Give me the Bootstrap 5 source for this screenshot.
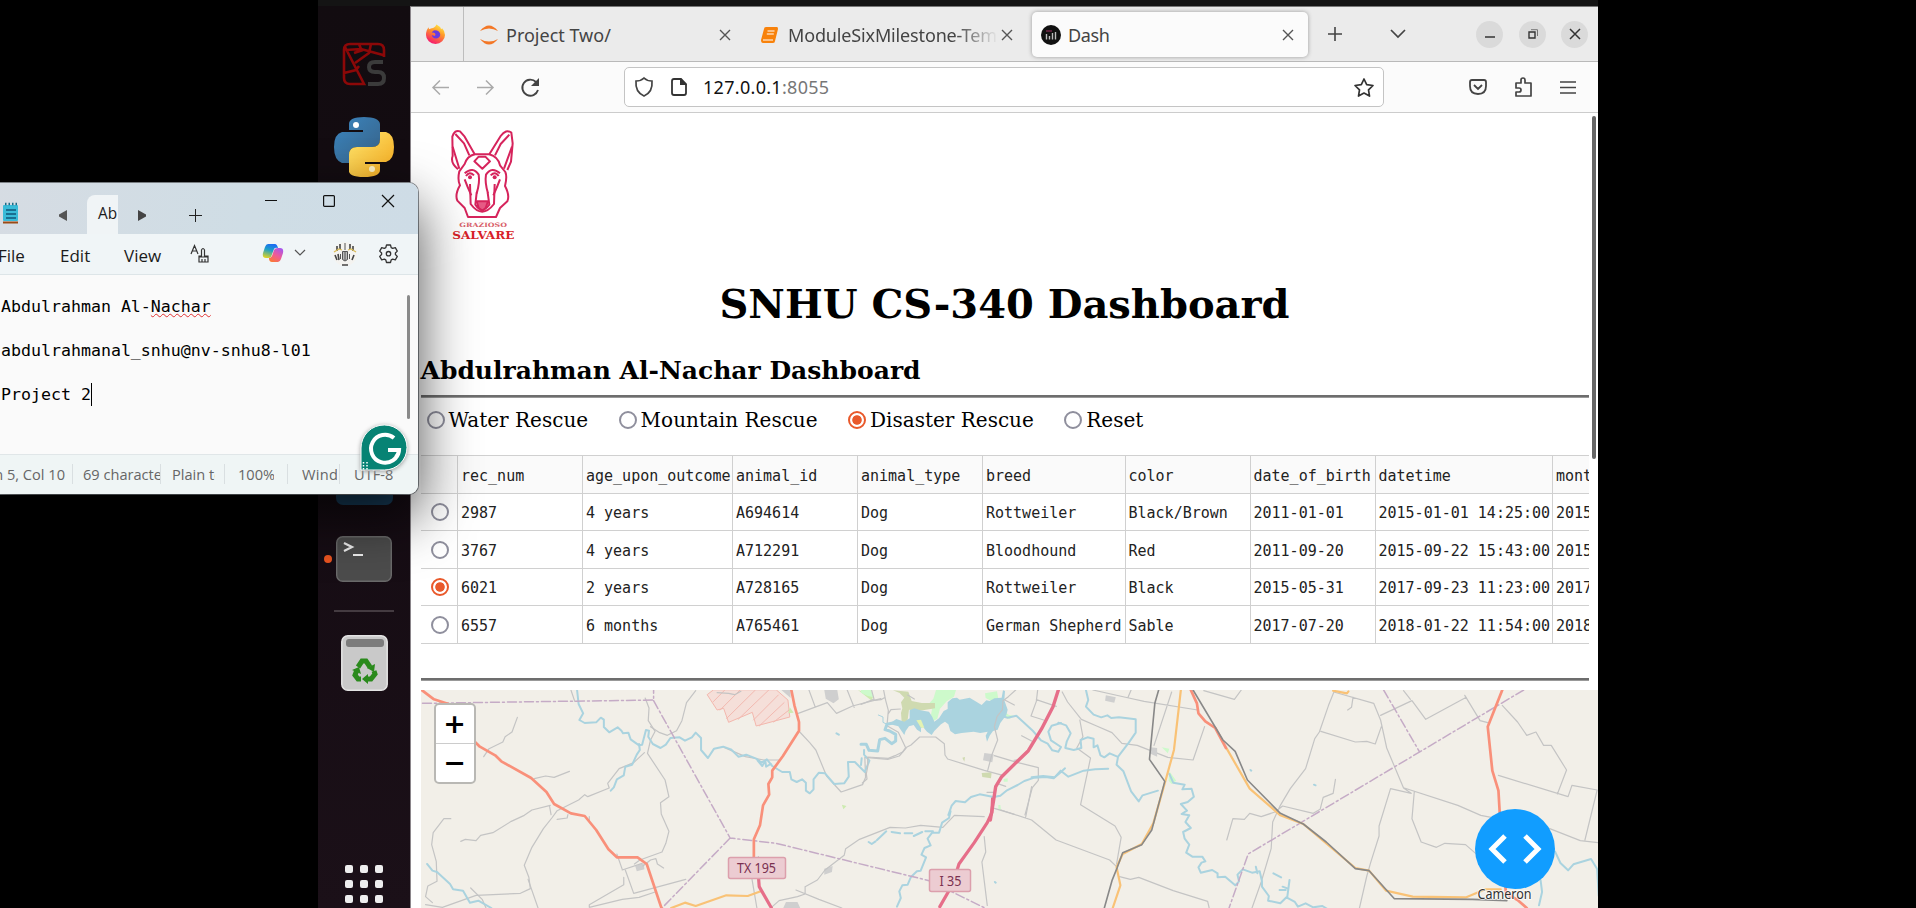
<!DOCTYPE html>
<html lang="en">
<head>
<meta charset="utf-8">
<title>Dash</title>
<link href="https://cdn.jsdelivr.net/npm/bootstrap@5.3.0/dist/css/bootstrap.min.css" rel="stylesheet">
<style>
html,body{height:100%}
body{background:#000;overflow:hidden;font-family:"Noto Sans",sans-serif;color:#222}
svg{display:block;overflow:visible;flex:none}
.desk{height:908px;padding-left:318px;position:relative}
.screen{width:1280px;height:908px;background:#141414;padding-top:6px}
.dock{width:92px;height:902px;background:linear-gradient(#120c10,#150c13 50%,#1b1018);padding-top:37px;position:relative}
.dock .term{margin-top:359px}
.dock .rule{width:60px;height:2px;background:#443b41;margin-top:28px}
.dock .bin{margin-top:23px}
.dock .apps{display:grid;grid-template-columns:repeat(3,8px);gap:7px;margin-top:174px}
.dock .apps i{width:8px;height:8px;border-radius:2px;background:#eee}
.running{position:absolute;left:6px;top:549px;width:8px;height:8px;border-radius:50%;background:#e95420}
.vsc{position:absolute;left:18px;top:450px;width:57px;height:49px;border-radius:7px;background:#18405f}
.browser{width:1188px;height:902px;background:#fff;overflow:hidden;border-left:1px solid #8a858a;border-top:1px solid #777}
.tabs{height:55px;background:#ebebeb;border-bottom:1px solid #b9b9b9;font:18px "Noto Sans",sans-serif;color:#444}
.pin{width:53px;height:54px;border-right:1px solid #bdbdbd;padding-left:15px}
.ftab{height:45px;padding-top:1px}
.ftab span{white-space:nowrap;overflow:hidden}
.ftab.on{width:276px;background:#fbfbfb;border-radius:5px;box-shadow:0 0 4px #999}
.fade-end{letter-spacing:-.15px;-webkit-mask-image:linear-gradient(90deg,#000 80%,transparent)}
.wbtn{width:27px;height:27px;border-radius:50%;background:#dadada}
.toolbar{height:51px;background:#fbfbfb;border-bottom:1px solid #ccc}
.url{width:760px;height:40px;border:1px solid #c4c4c4;border-radius:5px;background:#fff;font:18px "Noto Sans",sans-serif;color:#111}
.url span span{color:#777}
.page{position:relative;height:795px;padding-left:9.5px;color:#000;font-family:"DejaVu Serif",serif}
.inner{width:1168px}
.logo{margin-left:9.5px;padding-top:7px;height:149px}
h1.title{font:bold 40px/48px "DejaVu Serif",serif;margin:14px 0 0;text-align:center;padding-top:4px}
h3.who{font:bold 25px/30px "DejaVu Serif",serif;margin:28px 0 0;white-space:nowrap}
.bar{height:3px;background:#6d6d6d;border-bottom:1px solid #999}
.opts{height:34px;margin-top:4px;padding-left:6px;font:20px/36px "DejaVu Serif",serif}
.opts label{display:flex;align-items:center;gap:4px;margin-right:30.5px;white-space:nowrap;height:36px}
.rd{width:18px;height:18px;border:2.4px solid #8f8f9d;border-radius:50%;background:#fff;flex:none;display:block}
.rd.on{border-color:#e9592b;background:radial-gradient(circle,#e9592b 0 4.3px,#fff 5.2px)}
.grid-wrap{overflow:hidden;width:1168px;margin-top:19px}
.dt{table-layout:fixed;width:1256px;border-collapse:collapse;font:15px "DejaVu Sans Mono",monospace;color:#222;margin:0}
.dt td,.dt th{height:37.5px;border:1px solid #d0d0d0;padding:3px 0 0 3px;font-weight:400;white-space:nowrap;overflow:hidden;line-height:18px}
.dt th{background:#fafafa}
.dt tr>:first-child{border-left:0;padding:1px 0 0 10px}
.map{position:relative;width:1178px;height:219px;margin-top:9px;background:#f2efe8;overflow:hidden}
.zoomer{position:absolute;left:13px;top:13px;width:42px;height:81px;border:2px solid #b9b8b4;border-radius:5px;background:#fff;font:bold 27px/38px "DejaVu Sans",sans-serif;text-align:center;color:#000}
.zoomer div{height:38px}
.zoomer div+div{border-top:1px solid #ccc}
.thumb{position:absolute;right:2px;top:3px;width:4px;height:343px;border-radius:2px;background:#666}
.devbtn{position:absolute;left:1054px;top:119px;width:80px;height:80px;border-radius:50%;background:#119dff}
/* text editor window, floating above the desktop */
.note{position:absolute;left:-10px;top:183px;width:428px;height:311px;border-radius:0 9px 9px 0;box-shadow:0 22px 56px rgba(0,0,0,.7),0 0 0 1px #8c9196;background:#fafafa;font-family:"Open Sans","Noto Sans",sans-serif;color:#1b1b1b}
.n-tabs{height:51px;padding-left:10px;background:linear-gradient(100deg,#d6dce3,#cfdde5 60%,#cedce6);border-radius:0 9px 0 0}
.n-tab{width:31px;height:39px;background:#f0f4f6;border-radius:8px 0 0 0;overflow:hidden;font-size:15.4px;padding:9px 0 0 11px;white-space:nowrap;line-height:20px}
.n-menu{height:41px;background:#f0f5f7;border-bottom:1px solid #dde5e8;padding-left:9px;font-size:17px;line-height:43px}
.n-text{height:179px;padding:21px 0 0 11px;font:16.6px/22px "DejaVu Sans Mono",monospace;white-space:pre;color:#000}
.n-text u{text-decoration:underline wavy #e03030 1px;text-underline-offset:1px}
.n-stat{height:40px;background:#eff5f5;border-top:1px solid #e0e6e8;border-radius:0 0 9px 0;color:#666;font-size:14.6px;line-height:39px;white-space:nowrap;padding-left:4px}
.n-stat span{display:block;overflow:hidden}
.n-stat i{width:1px;height:20px;background:#d9dfe1;margin-top:9px}
.n-thumb{position:absolute;left:417px;top:112px;width:3px;height:124px;border-radius:2px;background:#8a8a8a}
.gram{position:absolute;left:370px;top:241px;filter:drop-shadow(0 1px 2px #999)}
.caret{border-right:1px solid #000;padding:2px 0}
.m path{fill:none;stroke-linejoin:round;stroke-linecap:round;vector-effect:non-scaling-stroke}
.m .w path{stroke:#aad3df;stroke-width:2}
.m .g path{stroke:#c4c4c4;stroke-width:1.2}
.m .p path{stroke:#c5abc6;stroke-width:1.5;stroke-dasharray:9 3 2 3}
.m .r path{stroke:#f9907a;stroke-width:2.7}
.m .y path{stroke:#f9c276;stroke-width:2.2}
.m .i path{stroke:#e66e89;stroke-width:3.2}
.m .k path{stroke:#888;stroke-width:1.6}
.m .f path{stroke:none}
</style>
</head>
<body>
<div class="desk">
<div class="screen d-flex">
 <aside class="dock d-flex flex-column align-items-center">
  <svg width="42" height="42" viewBox="0 0 42 42" fill="none" stroke="#8c0808" stroke-width="2.6"><path d="M41 14V7q0-6-6-6H7Q1 1 1 7v28q0 6 6 6h14L2 4M3 7l15-1 22 6M16 1l2 5M28 1l-2 9-14 10M20 7l-9 3M1 30l12-3 3-4"/><path d="M40 19h-8q-6 0-6 5t6 5h3q6 0 6 6t-6 6H25" stroke="#3b3b3b" stroke-width="4"/></svg>
  <svg style="margin-top:32px" width="60" height="60" viewBox="0 0 60 60"><defs><linearGradient id="pb" x1="0" y1="0" x2="1" y2="1"><stop stop-color="#3b86c0"/><stop offset="1" stop-color="#376186"/></linearGradient><linearGradient id="py" x1="0" y1="0" x2="1" y2="1"><stop stop-color="#ffe870"/><stop offset="1" stop-color="#f5a81c"/></linearGradient></defs><path fill="url(#pb)" d="M15 7q0-7 15-7t16 7v15q0 8-8 8H23q-8 0-8 8v8H8q-8-3-8-16t8-15h21v-2H15z"/><path fill="url(#py)" d="M46 15h6q8 2 8 15t-8 15H31v2h15v6q0 7-16 7t-15-7V38q0-8 8-8h15q8 0 8-8z"/><circle cx="22" cy="8" r="3" fill="#fff"/><circle cx="38" cy="52" r="3" fill="#fff3c4"/></svg>
  <svg class="term" width="56" height="46" viewBox="0 0 56 46"><rect x=".7" y=".7" width="54.6" height="44.6" rx="6" fill="#4c4c4c" stroke="#6a6a6a" stroke-width="1.4"/><path d="M8 7l8 4-8 4M17 19h10" fill="none" stroke="#eee" stroke-width="2.2"/></svg>
  <div class="rule"></div>
  <svg class="bin" width="47" height="56" viewBox="0 0 47 56"><rect x=".8" y=".8" width="45.4" height="54.4" rx="6" fill="#c9c9c9" stroke="#e4e4e4" stroke-width="1.5"/><rect x="5" y="4" width="38" height="8" rx="3" fill="#7c7c7c"/><g fill="none" stroke="#2a8a1c" stroke-width="5"><path d="M17 32l4-6h4l4 6M33 36l1 3-4 5h-5M20 44h-3l-3-4 2-5"/></g><path fill="#2a8a1c" d="M26 33l8-4-1 8zM27 39v10l-6-5zM11 35l7-3 2 7z"/></svg>
  <div class="apps"><i></i><i></i><i></i><i></i><i></i><i></i><i></i><i></i><i></i></div>
  <div class="vsc"></div><div class="running"></div>
 </aside>

 <main class="browser">
  <div class="tabs d-flex align-items-center">
   <div class="pin d-flex align-items-center">
    <svg width="19" height="20" viewBox="0 0 20 20"><defs><linearGradient id="fx" x1=".8" y1="0" x2=".3" y2="1"><stop stop-color="#fff24a"/><stop offset=".4" stop-color="#ff9a28"/><stop offset="1" stop-color="#f5136f"/></linearGradient></defs><path fill="url(#fx)" d="M11 0q4 2 5 5l1-1q3 3 3 7a10 9.4 0 01-20 0q0-5 3-8v2l3-1q3 0 5-4z"/><path fill="#6a3be0" d="M9 6q6 0 6 5a4.6 4.6 0 01-9 0l3 1q2-1 0-3-2-1-3 0 1-3 3-3z"/></svg>
   </div>
   <div class="ftab d-flex align-items-center" style="width:281px;padding-left:15px">
    <svg width="20" height="20" viewBox="0 0 20 20" fill="#f37726"><path d="M1 6q9-11 18 0Q10 1 1 6M1 14q9 11 18 0-9 5-18 0"/></svg>
    <span style="margin-left:7px;width:214px">Project Two/</span>
    <svg width="10" height="10" viewBox="0 0 10 10" stroke="#555" stroke-width="1.4"><path d="M0 0l10 10M10 0L0 10"/></svg>
   </div>
   <div class="ftab d-flex align-items-center" style="width:287px;padding-left:16px">
    <svg width="17" height="16" viewBox="0 0 17 16"><path fill="#f8820b" d="M5 0h11q1 0 1 2l-3 12q0 2-2 2H2q-2 0-2-3L3 2q0-2 2-2z"/><path d="M6.500 4h7M5.800 7h7M2 13h10" stroke="#fff" stroke-width="1.100"/></svg>
    <span class="fade-end" style="margin-left:10px;width:210px">ModuleSixMilestone-Temp</span>
    <svg style="margin-left:4px" width="10" height="10" viewBox="0 0 10 10" stroke="#555" stroke-width="1.4"><path d="M0 0l10 10M10 0L0 10"/></svg>
   </div>
   <div class="ftab on d-flex align-items-center" style="padding-left:9px">
    <svg width="20" height="20" viewBox="0 0 20 20"><circle cx="10" cy="10" r="10" fill="#111"/><path d="M5.500 14.500V9M8.500 14.500V11M11.500 14.500V8M14.500 14.500V7" stroke="#bbb" stroke-width="1.400"/><path d="M5 6h6" stroke="#a03060"/></svg>
    <span style="margin-left:7px;width:215px;letter-spacing:-.4px">Dash</span>
    <svg width="10" height="10" viewBox="0 0 10 10" stroke="#555" stroke-width="1.4"><path d="M0 0l10 10M10 0L0 10"/></svg>
   </div>
   <svg style="margin-left:20px" width="14" height="14" viewBox="0 0 14 14" stroke="#444" stroke-width="1.600"><path d="M7 0v14M0 7h14"/></svg>
   <svg style="margin-left:48px" width="16" height="8" viewBox="0 0 16 8" fill="none" stroke="#444" stroke-width="1.700"><path d="M1 0l7 7 7-7"/></svg>
   <div class="wbtn d-flex align-items-center justify-content-center" style="margin-left:70px"><svg width="10" height="10" viewBox="0 0 10 10" stroke="#333" stroke-width="1.500"><path d="M0 8h10"/></svg></div>
   <div class="wbtn d-flex align-items-center justify-content-center" style="margin-left:16px"><svg width="10" height="10" viewBox="0 0 10 10" fill="none" stroke="#333" stroke-width="1.400"><path d="M1 3h6v6H1z"/><path d="M3 .7h6.500V7" stroke="#777" stroke-width="1"/></svg></div>
   <div class="wbtn d-flex align-items-center justify-content-center" style="margin-left:15px"><svg width="10" height="10" viewBox="0 0 10 10" stroke="#333" stroke-width="1.500"><path d="M0 0l10 10M10 0L0 10"/></svg></div>
  </div>

  <div class="toolbar d-flex align-items-center">
   <svg style="margin-left:21px" width="17" height="15" viewBox="0 0 17 15" fill="none" stroke="#aaa" stroke-width="1.500"><path d="M17 7.500H1M8 .5l-7 7 7 7"/></svg>
   <svg style="margin-left:28px" width="17" height="15" viewBox="0 0 17 15" fill="none" stroke="#aaa" stroke-width="1.500"><path d="M0 7.500h16M9 .5l7 7-7 7"/></svg>
   <svg style="margin-left:27px" width="19" height="19" viewBox="0 0 19 19" fill="none" stroke="#444" stroke-width="1.900"><path d="M17 12A8 8 0 1115 4"/><path d="M18 0v8h-8z" fill="#444" stroke="none"/></svg>
   <div class="url d-flex align-items-center" style="margin-left:84px">
    <svg style="margin-left:10px" width="18" height="20" viewBox="0 0 18 20" fill="none" stroke="#444" stroke-width="1.700"><path d="M9 1q3 3 8 3 1 11-8 15Q0 15 1 4q5 0 8-3z"/></svg>
    <svg style="margin-left:18px" width="16" height="18" viewBox="0 0 16 18" fill="none" stroke="#333" stroke-width="1.800"><path d="M3 1h7l5 5v9q0 2-2 2H3q-2 0-2-2V3q0-2 2-2z"/><path d="M9 0v7h7z" fill="#333" stroke="none"/></svg>
    <span style="margin-left:16px;letter-spacing:.3px">127.0.0.1<span>:8055</span></span>
    <svg class="ms-auto" style="margin-right:9px" width="20" height="19" viewBox="0 0 20 19" fill="none" stroke="#333" stroke-width="1.700" stroke-linejoin="round"><path d="M10 1l2.700 5.600 6.300.9-4.500 4.400 1 6.200-5.500-3-5.500 3 1-6.200L1 7.500l6.300-.9z"/></svg>
   </div>
   <svg style="margin-left:85px" width="18" height="16" viewBox="0 0 18 16" fill="none" stroke="#444" stroke-width="1.800"><path d="M3 1h12q2 0 2 2v4q0 8-8 8T1 7V3q0-2 2-2zM5 6l4 4 4-4"/></svg>
   <svg style="margin-left:27px" width="18" height="20" viewBox="0 0 18 20" fill="none" stroke="#444" stroke-width="1.700" stroke-linejoin="round"><path d="M7 6V3q0-2 2-2t2 2v3h6v13H2v-4h3q2 0 2-2t-2-2H2V6z"/></svg>
   <svg style="margin-left:28px" width="16" height="13" viewBox="0 0 16 13" stroke="#444" stroke-width="1.500"><path d="M0 1h16M0 6.500h16M0 12h16"/></svg>
  </div>

  <div class="page">
   <div class="inner">
    <div class="logo">
     <svg width="110" height="130" viewBox="0 0 330 390"><g fill="none" stroke="#d6245c" stroke-width="6" stroke-linejoin="round">
      <path d="M84 148Q60 128 68 108L67 50Q74 28 90 34L104 50 134 103H178L212 48Q228 26 244 38L248 70 243 125 232 150"/>
      <path d="M68 80L88 146M76 42l26 28 16 36M246 80l-24 66M238 44l-26 28-17 34"/>
      <path d="M134 103Q112 108 104 132L88 154Q82 180 90 196 74 224 82 242L104 264 114 291H198L210 264 232 244Q240 226 225 198 232 170 226 156L210 136Q204 110 178 103"/>
      <path d="M133 124l13-14h20l14 14-23 22z"/>
      <path d="M108 168q10-16 24-2M206 168q-10-16-24-2"/>
      <path d="M104 178Q112 200 124 226M210 178Q202 200 190 226M104 160q25-22 42 4 4 24-6 56M210 160q-25-22-42 4-4 24 6 56"/>
      <path d="M120 192l2 60q34 46 70 0l2-60M140 218l-4 36q20 30 42 0l-5-36"/><path d="M140 244h34l-7 20-10 8-11-8z" fill="#e65a85"/></g>
      <circle cx="120" cy="172" r="6" fill="#d6245c"/><circle cx="194" cy="172" r="6" fill="#d6245c"/>
      <g fill="#cf2f35" font-family="DejaVu Serif,serif"><text x="88" y="321" font-size="18" font-weight="bold" fill="#d9606a" textLength="143" lengthAdjust="spacingAndGlyphs">GRAZIOSO</text><text x="67" y="356" font-size="31" font-weight="bold" fill="#d81f29" textLength="186" lengthAdjust="spacingAndGlyphs">SALVARE</text></g></svg>
    </div>
    <h1 class="title">SNHU CS-340 Dashboard</h1>
    <h3 class="who">Abdulrahman Al-Nachar Dashboard</h3>
    <div class="bar" style="margin-top:9px"></div>
    <div class="opts d-flex">
     <label><i class="rd"></i>Water Rescue</label><label><i class="rd"></i>Mountain Rescue</label><label><i class="rd on"></i>Disaster Rescue</label><label><i class="rd"></i>Reset</label>
    </div>
    <div class="grid-wrap">
     <table class="dt">
      <colgroup><col style="width:37px"><col style="width:125px"><col style="width:150px"><col style="width:125px"><col style="width:125px"><col style="width:142.500px"><col style="width:125px"><col style="width:125px"><col style="width:177.500px"><col style="width:124px"></colgroup>
      <tr><th></th><th>rec_num</th><th>age_upon_outcome</th><th>animal_id</th><th>animal_type</th><th>breed</th><th>color</th><th>date_of_birth</th><th>datetime</th><th>monthyear</th></tr>
      <tr><td><i class="rd"></i></td><td>2987</td><td>4 years</td><td>A694614</td><td>Dog</td><td>Rottweiler</td><td>Black/Brown</td><td>2011-01-01</td><td>2015-01-01 14:25:00</td><td>2015-01-01</td></tr>
      <tr><td><i class="rd"></i></td><td>3767</td><td>4 years</td><td>A712291</td><td>Dog</td><td>Bloodhound</td><td>Red</td><td>2011-09-20</td><td>2015-09-22 15:43:00</td><td>2015-09-22</td></tr>
      <tr><td><i class="rd on"></i></td><td>6021</td><td>2 years</td><td>A728165</td><td>Dog</td><td>Rottweiler</td><td>Black</td><td>2015-05-31</td><td>2017-09-23 11:23:00</td><td>2017-09-23</td></tr>
      <tr><td><i class="rd"></i></td><td>6557</td><td>6 months</td><td>A765461</td><td>Dog</td><td>German Shepherd</td><td>Sable</td><td>2017-07-20</td><td>2018-01-22 11:54:00</td><td>2018-01-22</td></tr>
     </table>
    </div>
    <div class="bar" style="margin-top:34px"></div>
   </div>
   <div class="map">
    <svg class="m" width="1178" height="218">
     <g transform="translate(-10 -20) scale(.38265 .33333)">
      <g class="f">
       <path style="fill:#f5dfd9;stroke:#f3b7ad;stroke-width:1" d="M790 60L774 74 800 120 817 115 830 157 892 127 902 168 990 141 985 90 955 60z"/>
       <path style="stroke:#f2b9b0;stroke-width:1" d="M820 60l-30 35M860 60l-52 60M900 60l-75 85M935 60l-80 88M960 75l-65 75M975 98l-65 70M988 120l-40 36"/>
       <path style="fill:#cfcfcf" d="M1080 60h34l4 28-14 12-20-14zM586 588l22-8 2 18-20 6zM1080 596l22-8-2 18-20 8zM980 696l30 0 8 20h-46zM968 60h24v24z"/>
       <path style="fill:#cdebb0" d="M1126 404l12 4-8 10zM1168 60l40 18-4 14zM990 112l10 16-14 2z"/>
      </g>
      <g class="g">
       <path d="M418 60l10 34M612 84l10 30-2 38 18 32-12 26-8 40 46 80 10 50-22 18 2 34 20 52-8 36-10 26-58 24-14 12"/>
       <path d="M744 62l-24 36-12 54-14 30-24 14-20-8-24-18M610 248l-28 30-38 18-30 44 4 14-56 26-8-6-16 16-56 32-14 22-22 32-30 56-20 54 12 36 4 34-26 14-116 6-88 36-44-8"/>
       <path d="M278 142l-14 44-18 14-6 16-36 20-14 24M414 304l-40 18-22-4-30 8M104 446l-18 0-28 42-4 36 12 50 2 60-24 14-6 32 18 18M364 406l-48 14-20 16-34 18-48 34-32 8-12 16-28-4-12 6M362 408l4 26M410 434l-2 10-26 4M466 440v14M306 628l26 86M156 654l30 34 10 26M538 552l14 46M552 600l52-20M560 600l22 70 136-42M466 712l0-8 90-60 0-22M466 712l86-24 44-6 42-16M606 588l20-18 14-4 4 16 16 12"/>
       <path d="M1016 186l26 32 16 22 28 78 38 48 20-8 36-14 8-22-2-60 60 6 30-10 18-24M1030 650l0 22-20 8-48 12-20 20M1030 650l32-20 20-30 50-44 4-20 36-28 80-36 40 2 40-8 58 6 30-36 78 4M1012 130l76-32 24 32 42-22 54-16 20-6M1040 60l16 50M1140 60l18 52M818 232l56 28 48 10h40M908 560l-18 60 14 94M1498 500l4 46-10 30 14 130M1006 660l60 28 60 26M800 68l30 2 16 4 16-10"/>
      </g>
      <g class="w">
       <path d="M434 60l4 42 12 28-10 20 14 9 30-2 12-14 8 6 0 22 14 16 22-15 10 10 4 8 14-2 6 20 22 18 8-2 10-44 8 2-2 18 12 22 20 12 14-10 12-20 24-2 14 10 18-10 10-14 14 16 0 36 18 24 16-28 24-6 20 8 20 22 20-6 26 12 14 12 14-10 14 20 26 18 20 0 4 22 14 8 14-8 10 10 0 24 10 8 10-12 0-30 14-20 16 2 24 32 26-2 12-20-2-44 18 0 26 30 12-34-14-18 0-14"/>
       <path d="M596 222l2 18-8 14-12 30-18 6-4 26-18 12-8 24-8 10M42 582l14 20 12 4 34 36 8 16 26 4 18 36 22-6 34 22M906 272l12 16 8-16 2 18 12-8M1410 424l-4 20-18 14-8 30-18 0-12 18 8 20-16 8-8 20 12 8-14 40-10 2-16 18-8 22-14 2-8 18 4 20-10 26"/>
       <path d="M1196 516l8 6 10-8M1218 510l24-26M1256 486l22 4M1290 490l20 0M1314 498l22-12M1344 484l20 0M1112 190l6 4M1526 636l2 2"/>
      </g>
      <g class="p"><path d="M30 100l604-10v-30M634 92l200 412 60 8 60 8 400 112 160 90M834 504l-178 210"/></g>
      <g class="r"><path d="M28 60l32 28 44 16M164 212l16 18 40 26 16 18 78 50 40 42 20 36 44 28 36 8 30 42 32 58 22 24h54l24 20 42 144M994 60l8 46 12 50v26l-42 76-28 44v20l-10 20 2 32-16 32-8 60-16 42 0 50-2 30"/></g>
      <g class="y"><path d="M680 714l36-16 28 10 80-32 56 2 34-14"/></g>
      <g class="i"><path d="M908 620l2 30 32 64M1520 384l-2 44-12 30-34 60-40 64-16 60-34 68"/></g>
     </g>
     <!-- lake and surroundings -->
     <g transform="translate(440 -5) scale(.33333)">
      <g class="f">
       <path style="fill:#cdfacb" d="M0 15h30l8 22-18-4-20-10zM225 15h60l-6 20-22 14-20 22-8 30-14 8-6-14 4-22-12-14 16-18zM372 25l36-6 4 22-22 6-16-8zM424 76l20 14 14 2-12 10-24-8zM428 282l12-2 0 10-12 0zM412 360l6 0 2 14-8 0z"/>
       <path style="fill:#cfdab0" d="M96 16l46 4 10 28 30 6 40 0 0 16-50 8-28-4-4 30-12 12-6-6-2-26 4-14-4-18 10-14-14-14zM362 264l30-2-2 18-26-4zM304 218l8-2-2 14z"/>
       <path style="fill:#cfcfcf" d="M370 204l28 4-4 24-28-6zM458 224l14-2-2 12-12-4z"/>
       <path style="fill:#aad3df" d="M92 112l14-10 24 8 16-10 0-24 14-6 18 6 26 4 10 16 6 14 14-10 14-22 12-6 0-20 14-12 14-2 8 6 30-6 20 12 16 10 14-14 10 2 14-8 22-2 4-22 6 2-2 28 10 28-4 16-18 24-8 20-14 4-10 14-8 18-4-18 6-12-22 4-20-4-36 4-20 4-14-10-6-20-10-8-12 8-20 20-8 12-14-10-12-14-6 4 0 12-12-8-10-14-14 4-10 14-4 12-10-14-8-12-24-6z"/>
       <path style="fill:#e3f3b2" d="M166 106l14-2 10 24-10 0z"/>
      </g>
      <g class="g"><path d="M68 16l6 30 8 30-4 46 34 20 22 46-8 12-24 12-20 8-62-4 0 30-4 20 2 16-14 12M134 188l16-8 26-24h48l26 20 2 34 8 12 110 34 58 16M32 16l8 30 20-2 10-6M0 58l36-14M464 15l-22 20-16 12-2 28-16 20-8 30 10 40-18 46-12 46M140 30l20 12M82 86l8-12 28-2M430 44l30 16M530 15l-4 34-16 44 38 12M526 44l60 20M400 212l60 18 72 18v38l-18 22-22 82M410 296l24 8M400 370l60 18M378 322l20 0M482 152l30 16"/></g>
      <g class="w"><path style="stroke-width:3" d="M0 178l16 0 8 18 26 2 6-34 16-4 20 16 12-8 0-20-18-10-14-4 6-16 18-4"/><path style="stroke-width:1" d="M52 90l14 6 0 16 12 6"/>
       <path d="M424 94l16 4 26-6 20 18 30 28 24 28 20 10 14 20 18 4 8-14-30-20-8-26 10-18 28-8M262 390l10-28 12-14 28 4 18-16 26-8 42 8 20-4 20-16 32-16 20-12 30-10 34-2 24 4 16-14 18-16M0 240l2-20"/></g>
      <g class="i"><path style="stroke-width:3.400" d="M592 15l-16 50-34 66-40 66-80 78-18 30-6 40-10 60"/></g>
     </g>
     <g transform="translate(580 -20) scale(.38265 .33333)">
      <g class="g">
       <path d="M160 66l14 30 36 52 40 20 40 20 26 32 40 6 80 36 66 8 30-100M206 150l8 50-16 34 36 30-26 140 90 64 16 34-12 80M80 350l-16 94M0 420l80 30 64 60 140 60 18 20M332 82l8-22M240 60l94 24 40 10 140 26M446 66l-46 160M530 62l80 26 18-28M870 66l-14 40-24 80-12 20-24 90-40 60-26 50-20 50-4 80-26 100-40 130M920 82l-4 30-10 8M870 66l104 34 18 50 16 84 44 120 20 16-54-14-30 112 0 30-22 80-10 40-20 100 14 14M836 184l90 32 30-2 22 8 16-52M992 136l82-44 36 56 106-66M1070 88l-18-26M1212 76l40 76 20 6M1310 106l40 50 24 40 24-10 20 40h20l40 74-24 72M1300 316l182 64 10-34 66 14-32 150M1054 354l140 52 60 30 180 40 80 36 48 6M1080 366l-6 80 24 70 40 16 22-12 54 4 60 60 10 40 36 30M590 510l16-64 30 2 14-18 30 10 36-14 20-18 80 22 18-12 8-36 26-12 6-42M310 620l28 8 22-6 90 40 90 32 4 20"/>
      </g>
      <g class="f"><path style="fill:#cdfacb" d="M440 304l18 28-12 10-8-10zM420 232l20 4-4 14z"/><path style="fill:#cfcfcf" d="M274 76l26 6-4 16-24-6zM390 232l18 2 0 26-20-10z"/></g>
      <g class="w">
       <path d="M222 60l6 30-6 20 20 24 20 8 16-6 10 8 20-2 44 6 0 40-18 30-28 42-4 24 18 20 20 60 20 30 10-18 40-14M150 158l20 8 12 24-10 24-4 20 22 6 20-6-2-24 18-8 16 4 0 26 10-6 8 30 10 6 14-12 20 10M80 322l30-4 30 4 16-20 20 18 40-18 30-4 34-2"/>
       <path d="M440 312l10 26 30 6-6 14 24-2 6 24-16 16-18 6 16 20-14 10 20 4-10 20 14 18-20 12 4 20 12 18-8 24 16 12 26 0 8 14-10 4-8 14 6 16 30-8 14 10 0 12 20-2 26 26 10-12-4-20 14-16 24 10 20-4 6 30 0 16 18 28-2 14 32 8 16-18 22 14 8 14 20-10 20 12 24-4 20 14"/>
       <path d="M712 610l20 12M754 630l-6 52M736 650l14 6M728 660l16 0M666 590l4 20M1448 545l14 34 20 22 14-18 46-16 16 30 4 80M1410 630l4 36-8 40M818 344l4 2M652 300l2 2"/>
      </g>
      <g class="p"><path d="M1366 60L646 552 596 714M1000 60l94 186"/></g>
      <g class="y"><path d="M470 60l-18 180-24 100-30 120-30 62-50 30-16 40 10 54-20 68M590 236l60 120 80 80 60 26 136 132 36 8 44 60 70 18 140 2 50-24 40 0M868 62l36 8 4-6"/></g>
      <g class="r"><path d="M496 60l16 40 4 30 18 24 26 20 28 60M1310 60l-38 110 12 132 16 60 4 80M1318 650l2 20 30 20 24 24"/></g>
      <g class="k"><path d="M412 60l-10 40-14 168 40 66-34 146-26 44-50 24-14 44-14 40-20 82M502 60l78 150 32 34 32 86 86 100 60 32 60 54 76 80 36 6 66 84 204 2 90 4"/></g>
     </g>
     <g font-family="Noto Sans,sans-serif" fill="#7a3050">
      <rect x="307.500" y="167.500" width="57" height="21" rx="2" fill="#ecccd2" stroke="#dc9fac" stroke-width="1.500"/><text x="316" y="183.300" font-size="14" textLength="39" lengthAdjust="spacingAndGlyphs">TX 195</text>
      <rect x="508.500" y="179.500" width="41" height="22" rx="2" fill="#ecccd2" stroke="#dc9fac" stroke-width="1.500"/><text x="518.500" y="196" font-size="14" textLength="22" lengthAdjust="spacingAndGlyphs">I 35</text>
      <text x="1056.500" y="208.500" font-size="13.500" fill="#333" stroke="#fff" stroke-opacity=".7" stroke-width="2" paint-order="stroke" textLength="54" lengthAdjust="spacingAndGlyphs">Cameron</text>
     </g>
    </svg>
    <div class="zoomer"><div>+</div><div>−</div></div>
    <div class="devbtn d-flex align-items-center justify-content-center"><svg width="52" height="30" viewBox="0 0 52 30" fill="none" stroke="#fff" stroke-width="5"><path d="M16 2L3 15l13 13M36 2l13 13-13 13"/></svg></div>
   </div>
   <div class="thumb"></div>
  </div>
 </main>
</div>

<section class="note">
 <div class="n-tabs d-flex">
  <svg style="margin:20px 0 0 3px" width="15" height="21" viewBox="0 0 15 21"><rect y="2" width="15" height="16" rx="1" fill="#39bbd8"/><path d="M2 1h12" stroke="#1c6a86" stroke-width="2.500" stroke-dasharray="1.500 2"/><path d="M3 7h10M3 11h10M3 15h10" stroke="#10577a" stroke-width="1.500"/><path d="M0 19.500h15" stroke="#9a4b15" stroke-width="2"/></svg>
  <svg style="margin:27px 0 0 41px" width="9" height="11" viewBox="0 0 9 11" fill="#555"><path d="M8 0v11L0 6.500v-2z"/></svg>
  <div class="n-tab" style="margin:12px 0 0 19px">Ab</div>
  <svg style="margin:27px 0 0 19px" width="9" height="11" viewBox="0 0 9 11" fill="#444"><path d="M1 0v11l8-4.500v-2z"/></svg>
  <svg style="margin:26px 0 0 43px" width="13" height="13" viewBox="0 0 13 13" stroke="#222"><path d="M6.500 0v13M0 6.500h13"/></svg>
  <svg style="margin:17px 0 0 63px" width="12" height="2" viewBox="0 0 12 2"><path d="M0 .5h12" stroke="#111"/></svg>
  <svg style="margin:12px 0 0 46px" width="12" height="12" viewBox="0 0 12 12" fill="none" stroke="#111" stroke-width="1.200"><rect x=".6" y=".6" width="10.800" height="10.800" rx="1"/></svg>
  <svg style="margin:12px 0 0 47px" width="12" height="12" viewBox="0 0 12 12" stroke="#111" stroke-width="1.200"><path d="M0 0l12 12M12 0L0 12"/></svg>
 </div>
 <div class="n-menu d-flex">
  <span style="width:62px;margin-left:-1px">File</span><span style="width:64px">Edit</span><span style="width:67px">View</span>
  <svg style="margin-top:11px" width="18" height="18" viewBox="0 0 18 18" fill="none" stroke="#333" stroke-width="1.200"><path d="M0 9L3.500.5 7 9M1 6h5M8 17v-6h2.500V5q1.500-3 3 0v6H17v6zM8 12h9M11 14v3M14 14v3"/></svg>
  <svg style="margin:10px 0 0 54px" width="20" height="18" viewBox="0 0 20 18"><defs><linearGradient id="ca" x1=".5" y1="0" x2=".2" y2="1"><stop stop-color="#1c6ef2"/><stop offset=".4" stop-color="#1c9fc8"/><stop offset="1" stop-color="#e8d51e"/></linearGradient><linearGradient id="cb" x1=".8" y1="0" x2=".2" y2="1"><stop stop-color="#a556f0"/><stop offset=".5" stop-color="#ee5a98"/><stop offset="1" stop-color="#fb7a32"/></linearGradient></defs><path fill="url(#ca)" d="M5 0h7q2 0 3 4-3-1-4 1L8 13q-1 1-3 1H3q-4 0-3-5l2-6q1-3 3-3z"/><path fill="url(#cb)" d="M15 4h2q4 0 3 5l-2 6q-1 3-3 3H9q-3 0-3-4 2 0 3-2l2-6q1-2 4-2z"/></svg>
  <svg style="margin:16px 0 0 12px" width="10" height="6" viewBox="0 0 10 6" fill="none" stroke="#555" stroke-width="1.200"><path d="M0 0l5 5 5-5"/></svg>
  <svg style="margin:8px 0 0 28px" width="24" height="24" viewBox="0 0 24 24"><circle cx="12" cy="12" r="12" fill="#f4f3f0"/><path d="M4 4v5M7 2v5M17 2v5M20 4v5M2 13l2 5M5 12l1 6M21 13l-2 5M9 23h6" stroke="#444" stroke-width="1.600"/><path d="M1 10l5-3 3 1M15 8l3-1 5 3" stroke="#d8bb58" fill="none" stroke-width="1.300"/><path d="M12 1v7M9.500 9.500h5v8q-2.500 3-5 0zM12 10v8M7.500 12v5M16.500 12v5" stroke="#555" fill="#bbb" stroke-width="1"/></svg>
  <svg style="margin:10px 0 0 22px" width="19" height="19" viewBox="0 0 19 19" fill="none" stroke="#333" stroke-width="1.300" stroke-linejoin="round"><path d="M7.500 1h4l.7 2.600 1.500.8 2.600-.7 2 3.400-1.900 1.900v1.500l1.900 1.900-2 3.400-2.600-.7-1.500.8-.7 2.600h-4l-.7-2.600-1.500-.8-2.600.7-2-3.400 1.900-1.900V9L.7 7.100l2-3.400 2.600.7 1.500-.8z"/><circle cx="9.500" cy="9.700" r="2.200"/></svg>
 </div>
 <div class="n-text">Abdulrahman Al-<u>Nachar</u>

abdulrahmanal_snhu@nv-snhu8-l01

Project 2<span class="caret"></span></div>
 <div class="n-stat d-flex">
  <span class="d-flex justify-content-end" style="width:71px">Ln 5, Col 10</span><i style="margin-left:7px"></i><span style="width:77px;margin-left:10px">69 characters</span><i></i><span style="width:43px;margin-left:11px">Plain text</span><i style="margin-left:9px"></i><span style="width:36px;margin-left:13px">100%</span><i style="margin-left:13px"></i><span style="width:35px;margin-left:14px;letter-spacing:.3px">Windows</span><i style="margin-left:2px"></i><span style="margin-left:14px">UTF-8</span>
 </div>
 <div class="n-thumb"></div>
 <svg class="gram" width="48" height="48" viewBox="0 0 48 48"><path d="M24.500 1a22.500 22.500 0 110 45H1V24A23 23 0 0124.500 1z" fill="#078374" stroke="#fff"/><path d="M34 14a14 14 0 105 12h-11M39 26q0 4-3 7" fill="none" stroke="#fff" stroke-width="4"/><path d="M3.500 38v8M7 38v8" stroke="#fff" stroke-width="1.500" stroke-dasharray="1.500 1.500"/></svg>
</section>
</div>
<script src="https://cdn.jsdelivr.net/npm/bootstrap@5.3.0/dist/js/bootstrap.bundle.min.js"></script>
</body>
</html>
